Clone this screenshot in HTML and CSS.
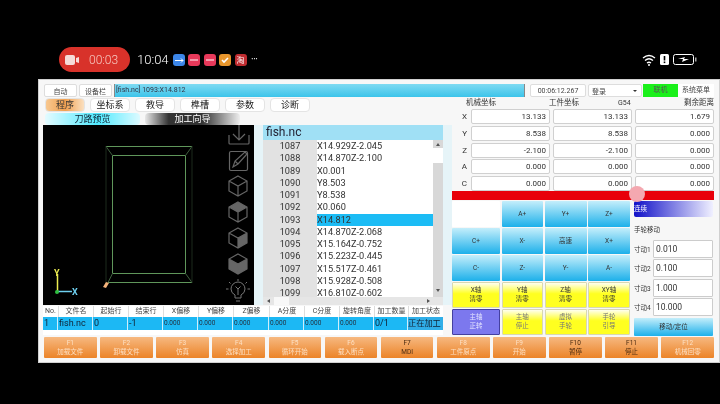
FILE: index.html
```html
<!DOCTYPE html>
<html lang="zh">
<head>
  <meta charset="UTF-8">
  <title>CNC</title>
  <link rel="stylesheet" href="styles.css">
</head>
<body>
  <div class="status-bar">
    <div class="rec-pill">
      <svg width="14" height="10" viewBox="0 0 14 10"><rect x="0" y="0" width="10" height="10" rx="2" fill="#f6dcd8"/><path d="M11 3l3-1v6l-3-1z" fill="#f6dcd8"/></svg>
      <span>00:03</span>
    </div>
    <span class="clock">10:04</span>
    <div class="notif-icons">
      <i class="notif n-blue"><svg width="12" height="12" viewBox="0 0 12 12"><path d="M2 6.500h8M8 4.500l2 2-2 2" stroke="#fff" fill="none"/></svg></i>
      <i class="notif n-pink"><svg width="12" height="12" viewBox="0 0 12 12"><path d="M2 6h8" stroke="#fff"/></svg></i>
      <i class="notif n-pink"><svg width="12" height="12" viewBox="0 0 12 12"><path d="M2 6h8" stroke="#fff"/></svg></i>
      <i class="notif n-orange"><svg width="12" height="12" viewBox="0 0 12 12"><path d="M3 6l2 2 4-4" stroke="#fff" stroke-width="1.600" fill="none"/></svg></i>
      <i class="notif n-red">淘</i>
      <span class="more">···</span>
    </div>
    <div class="sys-icons">
      <svg width="14" height="12" viewBox="0 0 14 12"><path d="M1 4q6-5 12 0M3 6.500q4-3.500 8 0M5 9q2-1.500 4 0" stroke="#fff" stroke-width="1.300" fill="none"/><circle cx="7" cy="11" r="1" fill="#fff"/></svg>
      <svg width="9" height="11" viewBox="0 0 9 11"><rect width="9" height="11" rx="1.500" fill="#fff"/><rect x="3.700" y="2" width="1.600" height="4.500" fill="#000"/><rect x="3.700" y="7.500" width="1.600" height="1.600" fill="#000"/></svg>
      <svg width="24" height="11" viewBox="0 0 24 11"><rect x=".5" y=".5" width="20" height="10" rx="2" fill="none" stroke="#fff"/><rect x="22" y="3.500" width="1.500" height="4" fill="#aaa"/><path d="M5 5l7-2-1 2h5l-7 3 1-3z" fill="#fff"/></svg>
    </div>
  </div>

  <div class="app">
    <div class="top-row">
      <button class="mini w-33">自动</button>
      <button class="mini w-33">设备栏</button>
      <div class="path-bar">[fish.nc] 1093:X14.812</div>
      <div class="mini time">00:06:12.267</div>
      <div class="mini login">登录<span class="caret"></span></div>
      <div class="online">联机</div>
      <div class="sys-menu">系统菜单</div>
    </div>

    <div class="main">
      <div class="left-col">
        <div class="tabs">
          <div class="tab tab-active">程序</div>
          <div class="tab">坐标系</div>
          <div class="tab">教导</div>
          <div class="tab">榫槽</div>
          <div class="tab">参数</div>
          <div class="tab">诊断</div>
        </div>
        <div class="subtabs">
          <div class="subtab sub-cyan">刀路预览</div>
          <div class="subtab sub-dark">加工向导</div>
        </div>

        <div class="work-row">
          <div class="canvas">
            <svg width="211" height="180" viewBox="43 125 211 180">
              <g fill="none" stroke="#4e7a4e" stroke-width="1">
                <path d="M106 146.500H192M112.500 155.500H185.500M112.500 155.500V273.500M185.500 155.500V273.500M112.500 273.500H185.500M108 282.500H192" stroke="#5f965a"/>
                <path d="M106 146.500L112.500 155.500M192 146.500L185.500 155.500M108 282.500L112.500 273.500M192 282.500L185.500 273.500" stroke="#3f5f3f"/>
                <path d="M106 146.500V282.500M192 146.500V282.500" stroke="#1c2a1c"/>
              </g>
              <path d="M103 287l3-5 3 1-3 5z" fill="#f3b27a"/>
              <path d="M57.500 274V291" stroke="#ecec50" stroke-width="1.500"/>
              <path d="M58 291.500H72" stroke="#6fd0f0" stroke-width="1.500"/>
              <circle cx="57" cy="292" r="2" fill="#2fc040"/>
              <text x="54" y="276" class="axis-y">Y</text>
              <text x="72" y="295" class="axis-x">X</text>

              <g fill="none" stroke="#666" stroke-width="1.200">
                <path d="M229 135v8a1 1 0 0 0 1 1h18a1 1 0 0 0 1-1v-8M239 125v15M233 134l6 6 6-6"/>
                <rect x="229.500" y="151.500" width="18" height="19" rx="1.500"/>
                <path d="M233 167l2-6 10-9 2 2-9 10zM235 161l3 3"/>
              </g>
              <use href="#cube" x="238" y="186"/>
              <path d="M238 202l9 5-9 5-9-5z" fill="#666"/>
              <use href="#cube" x="238" y="212"/>
              <path d="M247 233v10l-9 5v-10z" fill="#666"/>
              <use href="#cube" x="238" y="238"/>
              <path d="M229 259v10l9 5 9-5v-10l-9 5z" fill="#666"/>
              <use href="#cube" x="238" y="264"/>
              <g fill="none" stroke="#777">
                <path d="M235 298v-3q-4-2-4-6a7 7 0 0 1 14 0q0 4-4 6v3zM236 301h4M238 295v-6l-2.500-2.500M238 289l2.500-2.500"/>
                <path d="M238 279v2M229 282l1.500 1.500M247 282l-1.500 1.500M226 289h2.500M250 289h-2.500"/>
              </g>
              <defs>
                <g id="cube" fill="none" stroke="#666" stroke-width="1.200">
                  <path d="M0-10l9 5v10l-9 5-9-5v-10zM-9-5L0 0l9-5M0 0v10"/>
                </g>
              </defs>
            </svg>
          </div>
          <div class="strip"></div>
          <div class="code-panel">
            <div class="code-title">fish.nc</div>
            <div class="code-body">
              <div class="code-lines">
                <div class="line"><span class="ln">1087</span><span class="src">X14.929Z-2.045</span></div>
                <div class="line"><span class="ln">1088</span><span class="src">X14.870Z-2.100</span></div>
                <div class="line"><span class="ln">1089</span><span class="src">X0.001</span></div>
                <div class="line"><span class="ln">1090</span><span class="src">Y8.503</span></div>
                <div class="line"><span class="ln">1091</span><span class="src">Y8.538</span></div>
                <div class="line"><span class="ln">1092</span><span class="src">X0.060</span></div>
                <div class="line current"><span class="ln">1093</span><span class="src">X14.812</span></div>
                <div class="line"><span class="ln">1094</span><span class="src">X14.870Z-2.068</span></div>
                <div class="line"><span class="ln">1095</span><span class="src">X15.164Z-0.752</span></div>
                <div class="line"><span class="ln">1096</span><span class="src">X15.223Z-0.445</span></div>
                <div class="line"><span class="ln">1097</span><span class="src">X15.517Z-0.461</span></div>
                <div class="line"><span class="ln">1098</span><span class="src">X15.928Z-0.508</span></div>
                <div class="line"><span class="ln">1099</span><span class="src">X16.810Z-0.602</span></div>
              </div>
              <div class="vscroll"><span class="arrow-up"></span><span class="vthumb"></span><span class="arrow-down"></span></div>
            </div>
            <div class="hscroll"><span class="arrow-left"></span><span class="hthumb"></span><span class="arrow-right"></span></div>
          </div>
          <div class="strip"></div>
        </div>

        <div class="job-table">
          <div class="job-head">
            <span>No.</span><span>文件名</span><span>起始行</span><span>结束行</span><span>X偏移</span><span>Y偏移</span><span>Z偏移</span><span>A分度</span><span>C分度</span><span>旋转角度</span><span>加工数量</span><span>加工状态</span>
          </div>
          <div class="job-row">
            <span class="big">1</span><span class="big">fish.nc</span><span class="big">0</span><span class="big">-1</span><span>0.000</span><span>0.000</span><span>0.000</span><span>0.000</span><span>0.000</span><span>0.000</span><span class="big">0/1</span><span class="big state">正在加工</span>
          </div>
        </div>
      </div>

      <div class="right-col">
        <div class="coord-head">
          <span class="ch-a">机械坐标</span><span class="ch-b">工件坐标</span><span class="ch-c">G54</span><span class="ch-d">剩余距离</span>
        </div>
        <div class="coords">
          <span class="axis">X</span><div class="val">13.133</div><div class="val">13.133</div><div class="val">1.679</div>
          <span class="axis">Y</span><div class="val">8.538</div><div class="val">8.538</div><div class="val">0.000</div>
          <span class="axis">Z</span><div class="val">-2.100</div><div class="val">-2.100</div><div class="val">0.000</div>
          <span class="axis">A</span><div class="val">0.000</div><div class="val">0.000</div><div class="val">0.000</div>
          <span class="axis">C</span><div class="val">0.000</div><div class="val">0.000</div><div class="val">0.000</div>
        </div>
        <div class="red-bar"><span class="knob"></span></div>

        <div class="control">
          <div class="pad">
            <div class="key key-blank"></div>
            <div class="key">A+</div>
            <div class="key">Y+</div>
            <div class="key">Z+</div>
            <div class="key">C+</div>
            <div class="key">X-</div>
            <div class="key">高速</div>
            <div class="key">X+</div>
            <div class="key">C-</div>
            <div class="key">Z-</div>
            <div class="key">Y-</div>
            <div class="key">A-</div>
            <div class="key key-yellow">X轴<br>清零</div>
            <div class="key key-yellow">Y轴<br>清零</div>
            <div class="key key-yellow">Z轴<br>清零</div>
            <div class="key key-yellow">XY轴<br>清零</div>
            <div class="key key-purple">主轴<br>正转</div>
            <div class="key key-yellow key-dim">主轴<br>停止</div>
            <div class="key key-yellow key-dim">虚拟<br>手轮</div>
            <div class="key key-yellow key-dim">手轮<br>引导</div>
          </div>
          <div class="jog">
            <div class="jog-mode">连续</div>
            <div class="jog-title">手轮移动</div>
            <div class="jog-row"><span>寸动1</span><div class="jog-val">0.010</div></div>
            <div class="jog-row"><span>寸动2</span><div class="jog-val">0.100</div></div>
            <div class="jog-row"><span>寸动3</span><div class="jog-val">1.000</div></div>
            <div class="jog-row"><span>寸动4</span><div class="jog-val">10.000</div></div>
            <div class="key jog-move">移动/定位</div>
          </div>
        </div>
      </div>
    </div>

    <div class="fkeys">
      <div class="fkey">F1<br>加载文件</div>
      <div class="fkey">F2<br>卸载文件</div>
      <div class="fkey">F3<br>仿真</div>
      <div class="fkey">F4<br>选择加工</div>
      <div class="fkey">F5<br>循环开始</div>
      <div class="fkey">F6<br>载入断点</div>
      <div class="fkey fkey-on">F7<br>MDI</div>
      <div class="fkey">F8<br>工件原点</div>
      <div class="fkey">F9<br>开始</div>
      <div class="fkey fkey-on">F10<br>暂停</div>
      <div class="fkey fkey-on">F11<br>停止</div>
      <div class="fkey">F12<br>机械回零</div>
    </div>
  </div>
</body>
</html>
```

FILE: styles.css
```css
* {
  margin: 0;
  padding: 0;
  box-sizing: border-box;
}

html, body {
  width: 720px;
  height: 404px;
  background-color: #000;
  overflow: hidden;
  font-family: Roboto, "Noto Sans CJK SC", sans-serif;
  color: #222;
}

/* phone status bar */
.status-bar {
  height: 79px;
  display: flex;
  align-items: flex-start;
  padding: 47px 23px 0 59px;
  color: #fff;
  filter: blur(0.3px);
}

.rec-pill {
  width: 71px;
  height: 25px;
  border-radius: 13px;
  background-color: #d8322a;
  display: flex;
  align-items: center;
  gap: 10px;
  padding-left: 6px;
  font-size: 12px;
  font-weight: 300;
  color: #f6c8c0;
}

.clock {
  margin-left: 7px;
  font-size: 13px;
  line-height: 25px;
  font-weight: 300;
}

.notif-icons {
  display: flex;
  align-items: center;
  gap: 3.500px;
  margin-left: 4px;
  height: 25px;
}

.notif {
  width: 12px;
  height: 12px;
  border-radius: 3px;
  display: flex;
  align-items: center;
  justify-content: center;
  font-style: normal;
  font-size: 8px;
  color: #fff;
}

.n-blue { background-color: #3c86e8; }
.n-pink { background-color: #e8395a; }
.n-orange { background-color: #e8962c; }
.n-red { background-color: #c02c30; }

.more {
  font-size: 10px;
  margin-left: 1px;
  letter-spacing: -0.500px;
}

.sys-icons {
  margin-left: auto;
  display: flex;
  align-items: center;
  gap: 4px;
  height: 25px;
}

/* app window */
.app {
  width: 682px;
  height: 284px;
  margin-left: 38px;
  background-color: #f7f7f7;
  border: 1px solid #d0d0d0;
  padding: 4px 4px 0 4px;
  filter: blur(0.3px);
}

.top-row {
  height: 13px;
  display: flex;
  align-items: stretch;
  font-size: 7px;
}

.mini {
  background-color: #fff;
  border: 1px solid #ddd;
  border-radius: 2px;
  font: inherit;
  color: #444;
  display: flex;
  align-items: center;
  justify-content: center;
}

.w-33 {
  width: 33px;
  margin-left: 1px;
  margin-right: 1px;
}

.path-bar {
  width: 411px;
  margin-left: 1px;
  background: linear-gradient(#7fdaf2, #3cc4ea);
  border-left: 1px solid #888;
  border-right: 1px solid #888;
  padding-left: 1px;
  line-height: 13px;
  font-size: 7px;
  color: #334;
}

.time {
  width: 56px;
  margin-left: 5px;
}

.login {
  width: 54px;
  margin-left: 2px;
  justify-content: flex-start;
  padding-left: 3px;
  position: relative;
}

.caret {
  position: absolute;
  right: 4px;
  top: 5px;
  border: 2px solid transparent;
  border-top: 2.500px solid #333;
}

.online {
  width: 35px;
  margin-left: 1px;
  background-color: #1af01a;
  text-align: center;
  line-height: 13px;
  color: #555;
}

.sys-menu {
  width: 36px;
  background-color: #fff;
  text-align: center;
  line-height: 13px;
  color: #444;
}

.main {
  height: 239px;
  display: flex;
}

.left-col {
  width: 409px;
  display: flex;
  flex-direction: column;
}

/* tabs */
.tabs {
  height: 15px;
  display: flex;
  gap: 5px;
  padding: 1px 0 0 2px;
}

.tab {
  width: 40px;
  height: 14px;
  border: 1px solid #e4e4e4;
  border-radius: 4px;
  background-color: #fff;
  font-size: 9px;
  line-height: 12px;
  text-align: center;
  color: #222;
}

.tab-active {
  background: linear-gradient(90deg, #f8c890, #f0a050 50%, #fbe0c0);
  color: #333;
}

.subtabs {
  height: 13px;
  display: flex;
  gap: 5px;
  padding: 1px 0 0 2px;
}

.subtab {
  width: 95px;
  height: 12px;
  border-radius: 4px;
  font-size: 9px;
  line-height: 12px;
  text-align: center;
}

.sub-cyan {
  background: linear-gradient(90deg, #e4fbff, #50eaff 55%, #dcfaff);
  color: #123;
}

.sub-dark {
  background: linear-gradient(90deg, #e8e8e8, #333 25%, #333 60%, #eee);
  color: #fff;
}

.work-row {
  height: 180px;
  display: flex;
}

.canvas {
  width: 211px;
  height: 180px;
  background-color: #000;
}

.axis-x, .axis-y {
  font-size: 9px;
  font-weight: 700;
}

.axis-x { fill: #6fd0f0; }
.axis-y { fill: #ecec50; }

.strip {
  width: 9px;
  background-color: #e6f4f8;
}

/* program listing */
.code-panel {
  width: 180px;
  display: flex;
  flex-direction: column;
  background-color: #fff;
}

.code-title {
  height: 15px;
  background-color: #a0e0f5;
  font-size: 12px;
  line-height: 15px;
  padding-left: 3px;
  color: #223;
}

.code-body {
  height: 157px;
  display: flex;
  overflow: hidden;
}

.code-lines {
  width: 170px;
  height: 157px;
  overflow: hidden;
  font-size: 9.200px;
}

.line {
  height: 12.250px;
  line-height: 12.250px;
  display: flex;
}

.ln {
  width: 54px;
  background-color: #e2e2e2;
  text-align: center;
  color: #333;
}

.src {
  flex: 1;
  color: #333;
}

.current .src {
  background-color: #1cbcf5;
}

.vscroll {
  width: 10px;
  background-color: #d8d8d8;
  display: flex;
  flex-direction: column;
  align-items: center;
}

.vthumb {
  width: 10px;
  height: 15px;
  margin-top: 2px;
  background-color: #fff;
}

.arrow-up, .arrow-down, .arrow-left, .arrow-right {
  flex: none;
  border: 2.500px solid transparent;
}

.arrow-up {
  border-bottom: 3px solid #555;
  margin-top: 1px;
}

.arrow-down {
  border-top: 3px solid #555;
  margin-top: auto;
  margin-bottom: 3px;
}

.hscroll {
  height: 8px;
  background-color: #e6e6e6;
  display: flex;
  align-items: center;
  padding: 0 3px;
}

.hthumb {
  width: 15px;
  height: 8px;
  background-color: #f8f8f8;
  margin-left: 4px;
}

.arrow-left {
  border-right: 3px solid #555;
  margin-left: -1px;
}

.arrow-right {
  border-left: 3px solid #555;
  margin-left: auto;
  margin-right: 8px;
}

/* job table */
.job-table {
  width: 400px;
  height: 29px;
  margin-top: 1px;
  background-color: #fff;
}

.job-head, .job-row {
  display: grid;
  grid-template-columns: 15px 35px 35px 35px 35px 35px 36px 35px 35px 35px 34px 35px;
  white-space: nowrap;
  overflow: hidden;
}

.job-head {
  height: 11px;
  font-size: 7px;
  line-height: 11px;
  text-align: center;
  color: #444;
}

.job-head span + span {
  border-left: 1px solid #ddd;
}

.job-row {
  height: 13px;
  background-color: #1cb8f4;
  font-size: 6.500px;
  line-height: 13px;
  color: #234;
}

.job-row span {
  border-right: 1px solid #cfeefb;
  padding-left: 1px;
  overflow: hidden;
}

.job-row .big {
  font-size: 9px;
  color: #123;
}

.job-row .state {
  border-right: 0;
  font-size: 8.200px;
  padding-left: 0;
  background-color: #30aee8;
}

/* right column */
.right-col {
  width: 263px;
  display: flex;
  flex-direction: column;
}

.coord-head {
  height: 12px;
  display: flex;
  font-size: 7.500px;
  line-height: 12px;
  color: #333;
}

.ch-a { margin-left: 14px; width: 83px; }
.ch-b { width: 69px; }
.ch-c { width: 66px; font-size: 7px; }

.coords {
  display: grid;
  grid-template-columns: 16px 79px 79px 79px;
  column-gap: 3px;
  row-gap: 1.750px;
  height: 83px;
}

.axis {
  font-size: 8px;
  line-height: 15px;
  text-align: right;
  padding-right: 1px;
  color: #333;
}

.val {
  height: 15px;
  border: 1px solid #d0d0d0;
  border-radius: 2px;
  background-color: #fff;
  font-size: 8px;
  line-height: 13px;
  text-align: right;
  padding-right: 3px;
  color: #333;
}

.red-bar {
  width: 262px;
  height: 9px;
  background-color: #e8000a;
  position: relative;
}

.knob {
  position: absolute;
  left: 177px;
  top: -5px;
  width: 16px;
  height: 16px;
  border-radius: 50%;
  background-color: #f4a8b0;
}

.control {
  flex: 1;
  display: flex;
}

.pad {
  width: 178px;
  padding-top: 1px;
  display: grid;
  grid-template-columns: 48px 41.500px 42px 42px;
  grid-template-rows: 26px 26px 26px 26px 26px;
  gap: 1px 1.500px;
}

.key {
  background: linear-gradient(#c4eefb, #1cb0ea);
  border-radius: 1px;
  display: flex;
  align-items: center;
  justify-content: center;
  text-align: center;
  font-size: 6.500px;
  line-height: 9px;
  color: #333;
}

.key-blank {
  background: #fff;
}

.key-yellow {
  background: linear-gradient(#fffff0, #ffff20 45%, #ffff20);
  border: 1px solid #d8d8b0;
}

.key-dim {
  color: #777;
}

.key-purple {
  background-color: #7c78ee;
  background-image: none;
  border: 1px solid #4440a0;
  color: #e4e4ff;
}

.jog {
  width: 84px;
  padding: 1px 0 0 4px;
  display: flex;
  flex-direction: column;
}

.jog-mode {
  height: 16px;
  width: 79px;
  background: linear-gradient(90deg, #1010c8, #f0f0ff);
  border-radius: 2px;
  font-size: 6.500px;
  line-height: 16px;
  color: #fff;
  margin-bottom: 7px;
}

.jog-title {
  font-size: 6.500px;
  line-height: 12px;
  height: 15px;
  color: #333;
}

.jog-row {
  height: 19.500px;
  display: flex;
  align-items: center;
  font-size: 6.500px;
  color: #333;
}

.jog-row span {
  width: 19px;
  flex: none;
}

.jog-val {
  width: 60px;
  height: 18px;
  border: 1px solid #ccc;
  background-color: #fff;
  border-radius: 1px;
  font-size: 8.500px;
  line-height: 16px;
  padding-left: 2px;
}

.jog-move {
  height: 18px;
  width: 79px;
  margin-top: 1px;
}

/* function keys */
.fkeys {
  height: 21px;
  margin-top: 1px;
  display: grid;
  grid-template-columns: repeat(12, 1fr);
  column-gap: 3.500px;
  padding: 0 1px;
}

.fkey {
  background: linear-gradient(#f6b880, #ec8428);
  border-radius: 1px;
  font-size: 6.500px;
  line-height: 9px;
  padding-top: 2px;
  text-align: center;
  color: #fde0c4;
}

.fkey-on {
  color: #4a2a10;
}
```
